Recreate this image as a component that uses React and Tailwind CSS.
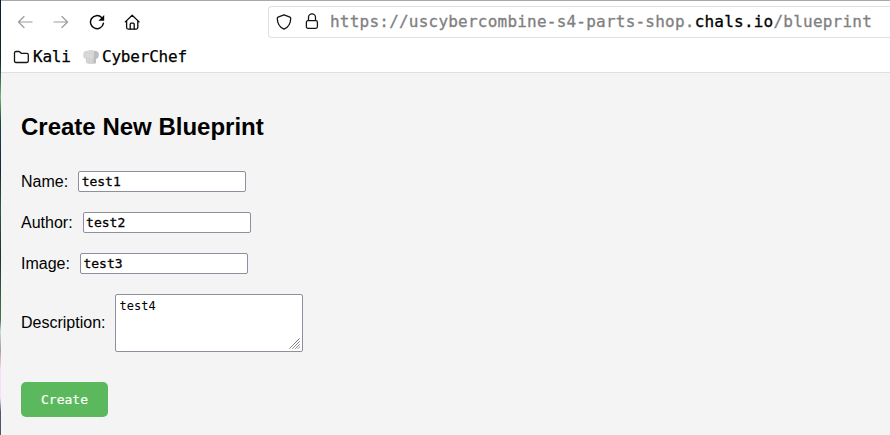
import React from "react";

const mono = "font-['DejaVu_Sans_Mono',monospace]";

function Arrow({ flip }) {
  return (
    <svg className={flip ? "h-4 w-4 -scale-x-100" : "h-4 w-4"} viewBox="0 0 16 16" fill="none" stroke="#9c9c9c" strokeWidth="1.2" strokeLinecap="round" strokeLinejoin="round">
      <path d="M15 8H1.5M7 2.5L1.5 8L7 13.5" />
    </svg>
  );
}

function Reload() {
  return (
    <svg className="h-4 w-4" viewBox="0 0 16 16" fill="none" stroke="#0a0a0a" strokeWidth="1.5" strokeLinecap="round">
      <path d="M12.6 3.5A6.5 6.5 0 1 0 14.4 9.3" />
      <path d="M15.2 1V6.8H9.4Z" fill="#0a0a0a" stroke="none" />
    </svg>
  );
}

function Home() {
  return (
    <svg className="-ml-px h-4 w-4" viewBox="0 0 16 16" fill="none" stroke="#0a0a0a" strokeWidth="1.3" strokeLinecap="round" strokeLinejoin="round">
      <path d="M1.3 7.9L8.2 1.2L15.1 7.9M2.6 7.2V13.6Q2.6 15.1 4.1 15.1H12.3Q13.8 15.1 13.8 13.6V7.2" />
      <path d="M6.2 15V10.2Q6.2 9.2 7.2 9.2H9.2Q10.2 9.2 10.2 10.2V15" />
    </svg>
  );
}

function Shield() {
  return (
    <svg className="h-4 w-4" viewBox="0 0 16 16" fill="none" stroke="#151515" strokeWidth="1.3" strokeLinejoin="round">
      <path d="M8 .8L14 3.1Q14.7 3.4 14.7 4.2C14.7 9.2 12.3 13.2 8 15.2C3.7 13.2 1.3 9.2 1.3 4.2Q1.3 3.4 2 3.1Z" />
    </svg>
  );
}

function Lock() {
  return (
    <svg className="-mt-px h-4 w-4" viewBox="0 0 16 16" fill="none" stroke="#151515" strokeWidth="1.3">
      <rect x="2.4" y="7.7" width="11" height="7.6" rx="1.5" />
      <path d="M4.5 7.5V4.4A3.5 3.5 0 0 1 11.5 4.4V7.5" />
    </svg>
  );
}

function Folder() {
  return (
    <svg className="h-4 w-4" viewBox="0 0 16 16" fill="none" stroke="#151515" strokeWidth="1.3" strokeLinejoin="round">
      <path d="M1.5 3.9Q1.5 2.5 2.9 2.5H5.7Q6.4 2.5 6.9 3L8.2 4.3H13.9Q15.3 4.3 15.3 5.7V12.1Q15.3 13.5 13.9 13.5H2.9Q1.5 13.5 1.5 12.1Z" />
    </svg>
  );
}

function ChefHat() {
  return (
    <svg className="h-4 w-4 -translate-x-px" viewBox="0 0 16 16">
      <path d="M3 10C0 9 .1 7.6 .2 5C.3 2.7 2 1.4 4.5 1.8C6 .6 9.7 .6 11.2 1.8C14 1.3 15.6 2.8 15.7 5C15.8 7.8 15.8 8.9 13 10Z" fill="#d6d6d6" />
      <path d="M3 9H13V14Q8 15.8 3 14Z" fill="#cecece" />
      <path d="M11 1.9Q15.6 1.6 15.6 5.5Q15.6 9 13 10V14L10.8 14.7V9Z" fill="#bdbdbd" />
      <path d="M5 6V14M8 5V14.6" stroke="#e0e0e0" strokeWidth=".8" />
    </svg>
  );
}

function Field({ label, value }) {
  return (
    <div className="flex h-[21px] items-center gap-2.5">
      <label className="leading-[21px]">{label}</label>
      <input
        defaultValue={value}
        className={`h-[21px] w-[168px] rounded-[2px] border border-[#8f8f9d] bg-white pb-px pl-[2.5px] text-[13px] leading-[17px] outline-none [-webkit-text-stroke:0.3px_black] ${mono}`}
      />
    </div>
  );
}

export default function App() {
  return (
    <div className="flex h-[435px] w-[890px] overflow-hidden bg-white text-black">
      <div className="w-px shrink-0 bg-[linear-gradient(to_bottom,#101c2a_0px,#14232b_60px,#315f49_76px,#73b86c_97px,#1c4548_122px,#122b33_170px,#31584c_210px,#1c322f_255px,#477950_320px,#c5dce6_331px,#b59b8c_350px,#f5def5_370px,#f9ddf7_398px,#505969_412px,#4e5666_435px)]" />
      <div className="flex min-w-0 flex-1 flex-col border-t border-[#a9a9a9]">
        <header className="h-[72px] shrink-0 border-b border-[#e0e0e0] bg-white">
          <div className="flex h-[41px] items-center pl-4">
            <div className="flex w-[251px] shrink-0 items-center gap-5">
              <Arrow />
              <Arrow flip />
              <Reload />
              <Home />
            </div>
            <div className="flex h-8 flex-1 items-center rounded-l-[4px] border border-r-0 border-[#e0e0e0] pl-[7px]">
              <Shield />
              <span className="ml-3"><Lock /></span>
              <span className={`ml-[10px] whitespace-pre text-[16px] tracking-[0.222px] text-[#808080] [-webkit-text-stroke:0.3px_currentColor] ${mono}`}>
                https://uscybercombine-s4-parts-shop.<span className="text-black [-webkit-text-stroke:0.3px_black]">chals.io</span>/blueprint
              </span>
            </div>
          </div>
          <div className={`flex h-[30px] items-center pl-3 text-[16px] [-webkit-text-stroke:0.25px_black] ${mono}`}>
            <Folder />
            <span className="ml-1 w-[51px] tracking-[-0.2px]">Kali</span>
            <ChefHat />
            <span className="ml-[2px] tracking-[-0.2px]">CyberChef</span>
          </div>
        </header>
        <main className="flex-1 bg-[#f4f4f4] pl-5 pt-10 font-['Liberation_Sans',Arial,sans-serif] text-[16px]">
          <h2 className="text-2xl font-bold leading-7">Create New Blueprint</h2>
          <form className="mt-[30px] flex flex-col gap-5" onSubmit={(e) => e.preventDefault()}>
            <Field label="Name:" value="test1" />
            <Field label="Author:" value="test2" />
            <Field label="Image:" value="test3" />
            <div className="flex items-center gap-2.5">
              <label>Description:</label>
              <div className="flex h-[58px] w-[188px] items-end rounded-[2px] border border-[#8f8f9d] bg-white pb-0.5 pr-0.5">
                <textarea
                  defaultValue="test4"
                  className={`h-[54px] min-w-0 flex-1 resize-none bg-transparent pl-[3px] pt-1 text-[12px] leading-[14px] outline-none ${mono}`}
                />
                <svg className="h-[11px] w-[11px] shrink-0" viewBox="0 0 11 11" stroke="#4a4a4a" strokeWidth="1" strokeDasharray="1.2 .3">
                  <path d="M.5 10.5L10.5 .5M3.5 10.5L10.5 3.5M6.5 10.5L10.5 6.5M9 10.5L10.5 9" />
                </svg>
              </div>
            </div>
            <button className={`mt-2.5 h-[35px] w-[87px] rounded-[5px] bg-[#5cb85c] text-[13px] text-white [-webkit-text-stroke:0.2px_white] ${mono}`}>Create</button>
          </form>
        </main>
      </div>
    </div>
  );
}
